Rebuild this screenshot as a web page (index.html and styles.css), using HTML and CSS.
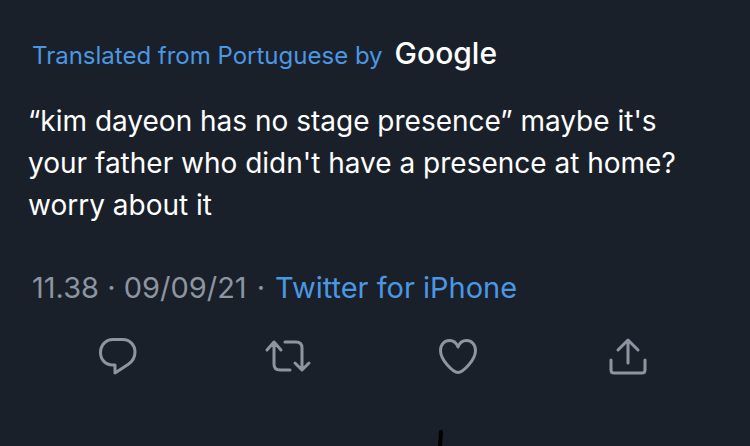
FILE: index.html
```html
<!DOCTYPE html>
<html lang="en">
<head>
    <meta charset="UTF-8">
    <meta name="viewport" content="width=device-width, initial-scale=1.0">
    <title>Tweet</title>
    <link rel="stylesheet" href="styles.css">
</head>
<body>
    <article class="tweet">
        <div class="translation">
            <a href="#">Translated from Portuguese by</a>
            <span class="google">Google</span>
        </div>

        <p class="text">“kim dayeon has no stage presence” maybe it's your father who didn't have a presence at home? worry about it</p>

        <div class="meta">
            <time datetime="2021-09-09T11:38">11.38 · 09/09/21</time>
            <span>·</span>
            <a href="#">Twitter for iPhone</a>
        </div>

        <div class="actions">
            <button type="button" aria-label="Reply">
                <svg class="icon" viewBox="0 0 48 48">
                    <path d="M20 7.500h10c6.500 0 12 5.500 12 12.500c0 6-2.500 9.500-7 12.500L22 41V33h-2.500C12.500 33 7.500 27.500 7.500 20.500S12.500 7.500 20 7.500z"/>
                </svg>
            </button>
            <button type="button" aria-label="Retweet">
                <svg class="icon" viewBox="0 0 48 48">
                    <path d="M3 18l7-8 7 8M10 11v21c0 4 2 6 6 6h10M21 10h11c4 0 6 2 6 6v21M31 31l7 7 7-7"/>
                </svg>
            </button>
            <button type="button" aria-label="Like">
                <svg class="icon" viewBox="0 0 48 48">
                    <path d="M24 40.500C19 40.500 6.500 28 6.500 18.500C6.500 12.500 10.500 8.500 15.500 8.500c4 0 7 2.500 8.500 6.500c1.500-4 4.500-6.500 8.500-6.500c5 0 9 4 9 10C41.500 28 29 40.500 24 40.500z"/>
                </svg>
            </button>
            <button type="button" aria-label="Share">
                <svg class="icon" viewBox="0 0 48 48">
                    <path d="M13 18L23 8l10 10M23 9v22M6 28v10c0 2 1 3 3 3h28c2 0 3-1 3-3V28"/>
                </svg>
            </button>
        </div>

        <div class="mark">
            <svg width="8" height="16" viewBox="0 0 8 16">
                <path d="M5 2L4 16"/>
            </svg>
        </div>
    </article>
</body>
</html>
```

FILE: styles.css
```css
body { margin: 0; background: #19202a; color: #fff; font-family: Inter, "Liberation Sans", sans-serif; }
a { color: #4c97e3; text-decoration: none; }
.tweet { padding: 33px 28px 0; }
.translation { display: flex; align-items: baseline; gap: 12px; padding-left: 4px; font-size: 24px; line-height: 40px; }
.google { font-size: 30px; font-weight: 500; }
.text { margin: 24px 0 0; font-size: 28px; line-height: 42px; }
.meta { display: flex; gap: 10px; margin-top: 42px; padding-left: 4px; color: #8d95a1; font-size: 29px; line-height: 40px; }
.actions { display: flex; margin-top: 24px; padding: 0 8px 0 4px; }
.actions button { flex: 1; display: flex; justify-content: center; padding: 0; border: 0; background: none; color: #8d95a1; cursor: pointer; }
.icon { width: 48px; height: 48px; fill: none; stroke: currentColor; stroke-width: 3; stroke-linecap: round; stroke-linejoin: round; }
.mark { display: flex; justify-content: center; margin-top: 50px; padding-left: 130px; }
.mark svg { display: block; fill: none; stroke: #000; stroke-width: 4; stroke-linecap: round; }
```
